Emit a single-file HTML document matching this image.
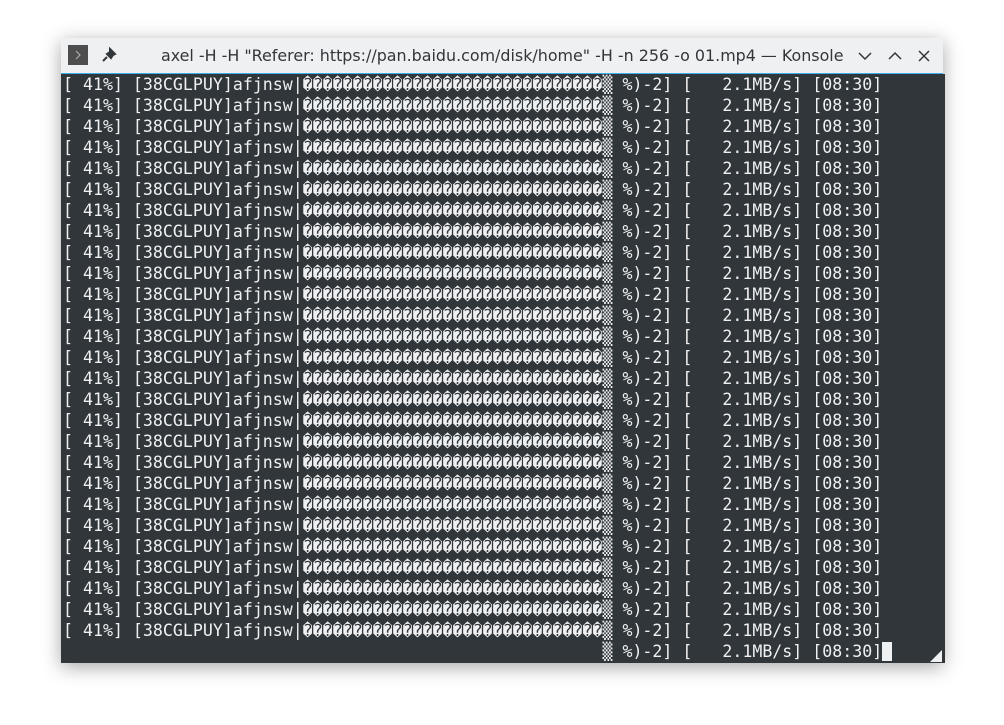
<!DOCTYPE html>
<html><head><style>
body{margin:0;width:1004px;height:725px;background:#fff;position:relative;overflow:hidden;font-family:"Liberation Sans",sans-serif}
.win{position:absolute;left:61px;top:38px;width:882px;height:625px;box-shadow:0 4px 18px rgba(0,0,0,.35);background:#31363b}
.title{position:absolute;left:0;top:0;width:882px;height:35px;background:#eff0f1;border-bottom:1px solid #3daee9}
.title .t{position:absolute;left:100px;top:8px;font-family:"DejaVu Sans",sans-serif;font-size:15.9px;color:#31363b;white-space:nowrap}
.ic{position:absolute;left:7px;top:7px;width:20px;height:20px;background:#4d4d4d}
.term{position:absolute;left:0;top:36px;width:882px;height:589px;background:#31363b;color:#eff0f1;font-family:"DejaVu Sans Mono",monospace;font-size:16.6px;line-height:21px;white-space:pre;padding-left:2px}
.cur{background:#eff0f1}
</style></head><body>
<div class="win">
<div class="title">
<div class="ic"><svg width="20" height="20"><path d="M8 6l4 4-4 4" stroke="#aaa" fill="none" stroke-width="1.2"/></svg></div>
<svg style="position:absolute;left:40px;top:9px" width="16" height="16"><path d="M9 2l5 5-2 1-2 3-4-4 3-2zM6 10l-4 4" stroke="#31363b" stroke-width="2" fill="#31363b"/></svg>
<div class="t">axel -H -H "Referer: https://pan.baidu.com/disk/home" -H -n 256 -o 01.mp4 — Konsole</div>
<svg style="position:absolute;left:797px;top:10px" width="80" height="16"><path d="M1 5l6 6 6-6M31 11l6-6 6 6M61 3l10 10M71 3l-10 10" stroke="#31363b" stroke-width="1.5" fill="none"/></svg>
</div>
<div class="term" id="t"></div>
<svg style="position:absolute;right:1px;bottom:1px" width="12" height="12"><path d="M12 0L12 12L0 12Z" fill="#eff0f1"/></svg>
</div>
<script>
var l="[ 41%] [38CGLPUY]afjnsw|"+"\uFFFD".repeat(30)+"\u2592 %)-2] [   2.1MB/s] [08:30]";
var s="";for(var i=0;i<27;i++)s+=l+"\n";
s+=" ".repeat(54)+"\u2592 %)-2] [   2.1MB/s] [08:30]<span class=cur> </span>";
document.getElementById("t").innerHTML=s;
</script>
</body></html>
